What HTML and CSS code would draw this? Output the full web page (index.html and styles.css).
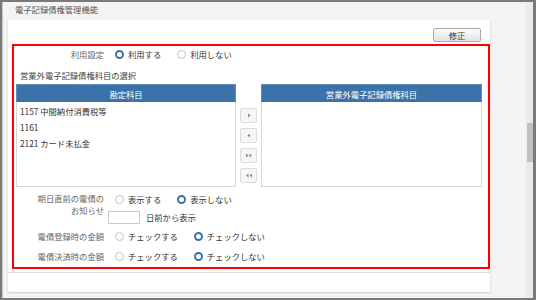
FILE: index.html
```html
<!DOCTYPE html>
<html lang="ja">
<head>
<meta charset="utf-8">
<link rel="stylesheet" href="styles.css">
</head>
<body>
<div class="frame">
  <div class="main">
    <div class="page-title">電子記録債権管理機能</div>
    <div class="card">
      <div class="toolbar"><button class="btn">修正</button></div>
      <div class="form">
        <div class="row row-use">
          <div class="label">利用設定</div>
          <div class="radios">
            <span class="radio"><span class="dot on"></span>利用する</span>
            <span class="radio"><span class="dot"></span>利用しない</span>
          </div>
        </div>
        <div class="section-title">営業外電子記録債権科目の選択</div>
        <div class="lists">
          <div class="panel panel-left">
            <div class="panel-head">勘定科目</div>
            <div class="panel-body">
              <div class="item">1157 中間納付消費税等</div>
              <div class="item">1161</div>
              <div class="item">2121 カード未払金</div>
            </div>
          </div>
          <div class="movers">
            <span class="mv"><svg width="8" height="5" viewBox="0 0 8 5"><path d="M3 0.5 L5.5 2.5 L3 4.5Z" fill="#8a8a8a"/></svg></span>
            <span class="mv"><svg width="8" height="5" viewBox="0 0 8 5"><path d="M5 0.5 L2.5 2.5 L5 4.5Z" fill="#8a8a8a"/></svg></span>
            <span class="mv"><svg width="8" height="5" viewBox="0 0 8 5"><path d="M1 0.5 L3.5 2.5 L1 4.5Z M4.5 0.5 L7 2.5 L4.5 4.5Z" fill="#8a8a8a"/></svg></span>
            <span class="mv"><svg width="8" height="5" viewBox="0 0 8 5"><path d="M3.5 0.5 L1 2.5 L3.5 4.5Z M7 0.5 L4.5 2.5 L7 4.5Z" fill="#8a8a8a"/></svg></span>
          </div>
          <div class="panel panel-right">
            <div class="panel-head">営業外電子記録債権科目</div>
            <div class="panel-body"></div>
          </div>
        </div>
        <div class="row-notice">
          <div class="label label-multi">期日直前の電債の<br>お知らせ</div>
          <div class="notice-content">
            <div class="radios radios-tight">
              <span class="radio"><span class="dot"></span>表示する</span>
              <span class="radio"><span class="dot on"></span>表示しない</span>
            </div>
            <div class="days">
              <span class="days-input"></span>
              <span class="days-text">日前から表示</span>
            </div>
          </div>
        </div>
        <div class="row row-check first-check">
          <div class="label">電債登録時の金額</div>
          <div class="radios">
            <span class="radio"><span class="dot"></span>チェックする</span>
            <span class="radio"><span class="dot on"></span>チェックしない</span>
          </div>
        </div>
        <div class="row row-check">
          <div class="label">電債決済時の金額</div>
          <div class="radios">
            <span class="radio"><span class="dot"></span>チェックする</span>
            <span class="radio"><span class="dot on"></span>チェックしない</span>
          </div>
        </div>
      </div>
      <div class="card-foot"></div>
    </div>
  </div>
  <div class="scrollbar"><div class="thumb"></div></div>
</div>
</body>
</html>
```

FILE: styles.css
```css
html, body {
  margin: 0;
  padding: 0;
}
body {
  font-family: "Noto Sans CJK JP", "Noto Sans", sans-serif;
  font-size: 8.3px;
  color: #333;
  line-height: 1.2;
}
.frame {
  width: 536px;
  height: 300px;
  box-sizing: border-box;
  border: 2px solid #7a7a7a;
  border-right-width: 3px;
  display: flex;
}
.main {
  flex: 1;
  background: #f4f4f4;
  border-left: 1px solid #c8c8c8;
  padding-left: 5px;
}
.page-title {
  height: 18px;
  line-height: 14px;
  padding-left: 7px;
  color: #555;
}
.card {
  width: 482px;
  height: 272px;
  box-sizing: border-box;
  background: #fff;
  box-shadow: 0 1px 2px rgba(0, 0, 0, 0.18);
  padding-top: 8px;
  display: flex;
  flex-direction: column;
}
.toolbar {
  display: flex;
  justify-content: flex-end;
  padding-right: 9px;
  height: 14px;
  margin-bottom: 2px;
}
.btn {
  width: 48px;
  height: 14px;
  padding: 0;
  box-sizing: border-box;
  border: 1px solid #a8a8a8;
  border-radius: 2px;
  background: linear-gradient(#fbfbfb, #e4e4e4);
  font-family: inherit;
  font-size: 8.3px;
  line-height: 12px;
  color: #333;
}
.form {
  margin-left: 4px;
  height: 225px;
  box-sizing: border-box;
  border: 2px solid #f00;
}
.card-foot {
  margin-top: 3px;
  border-top: 1px solid #dedede;
  flex: 1;
}
.row {
  display: flex;
  align-items: center;
}
.row-use {
  height: 18px;
}
.label {
  width: 90px;
  flex: none;
  text-align: right;
  color: #666;
}
.radios {
  display: flex;
  align-items: center;
  gap: 16px;
  margin-left: 11px;
}
.radio {
  display: flex;
  align-items: center;
  gap: 4px;
}
.dot {
  width: 9px;
  height: 9px;
  box-sizing: border-box;
  border-radius: 50%;
  border: 1px solid #c4c4c4;
  background: #fff;
  flex: none;
}
.dot.on {
  border: 2.6px solid #3a72aa;
}
.section-title {
  padding-top: 2px;
  height: 18px;
  line-height: 18px;
  padding-left: 6px;
  color: #444;
}
.lists {
  display: flex;
  gap: 4px;
  margin-left: 2px;
  margin-right: 6px;
  height: 103px;
}
.panel {
  display: flex;
  flex-direction: column;
}
.panel-left {
  width: 220px;
}
.panel-right {
  flex: 1;
}
.panel-head {
  height: 18px;
  line-height: 18px;
  background: #3b72a8;
  border: 1px solid #5f8dbb;
  border-bottom: none;
  box-sizing: border-box;
  color: #fff;
  text-align: center;
}
.panel-body {
  flex: 1;
  border: 1px solid #d8d8d8;
  border-top: none;
  padding-top: 1px;
}
.item {
  height: 16px;
  line-height: 16px;
  padding-left: 3px;
  color: #333;
}
.movers {
  width: 17px;
  flex: none;
  display: flex;
  flex-direction: column;
  gap: 5px;
  padding-top: 24px;
}
.mv {
  height: 15px;
  box-sizing: border-box;
  border: 1px solid #dcdcdc;
  border-radius: 2px;
  background: #f6f6f6;
  display: flex;
  align-items: center;
  justify-content: center;
}
.row-notice {
  display: flex;
  align-items: flex-start;
  margin-top: 8px;
}
.label-multi {
  line-height: 12px;
  margin-top: -3px;
}
.notice-content {
  margin-left: 4px;
}
.radios-tight {
  height: 10px;
  margin-left: 7px;
}
.days {
  display: flex;
  align-items: center;
  margin-top: 6px;
}
.days-input {
  width: 32px;
  height: 13px;
  box-sizing: border-box;
  border: 1px solid #c8c8c8;
  background: #fff;
}
.days-text {
  margin-left: 6px;
}
.row-check {
  height: 20px;
}
.first-check {
  margin-top: 3px;
}
.scrollbar {
  width: 7px;
  flex: none;
  background: #ebebeb;
  padding-top: 121px;
  box-sizing: border-box;
}
.thumb {
  height: 39px;
  margin-left: 1px;
  background: #c1c1c1;
}
```
